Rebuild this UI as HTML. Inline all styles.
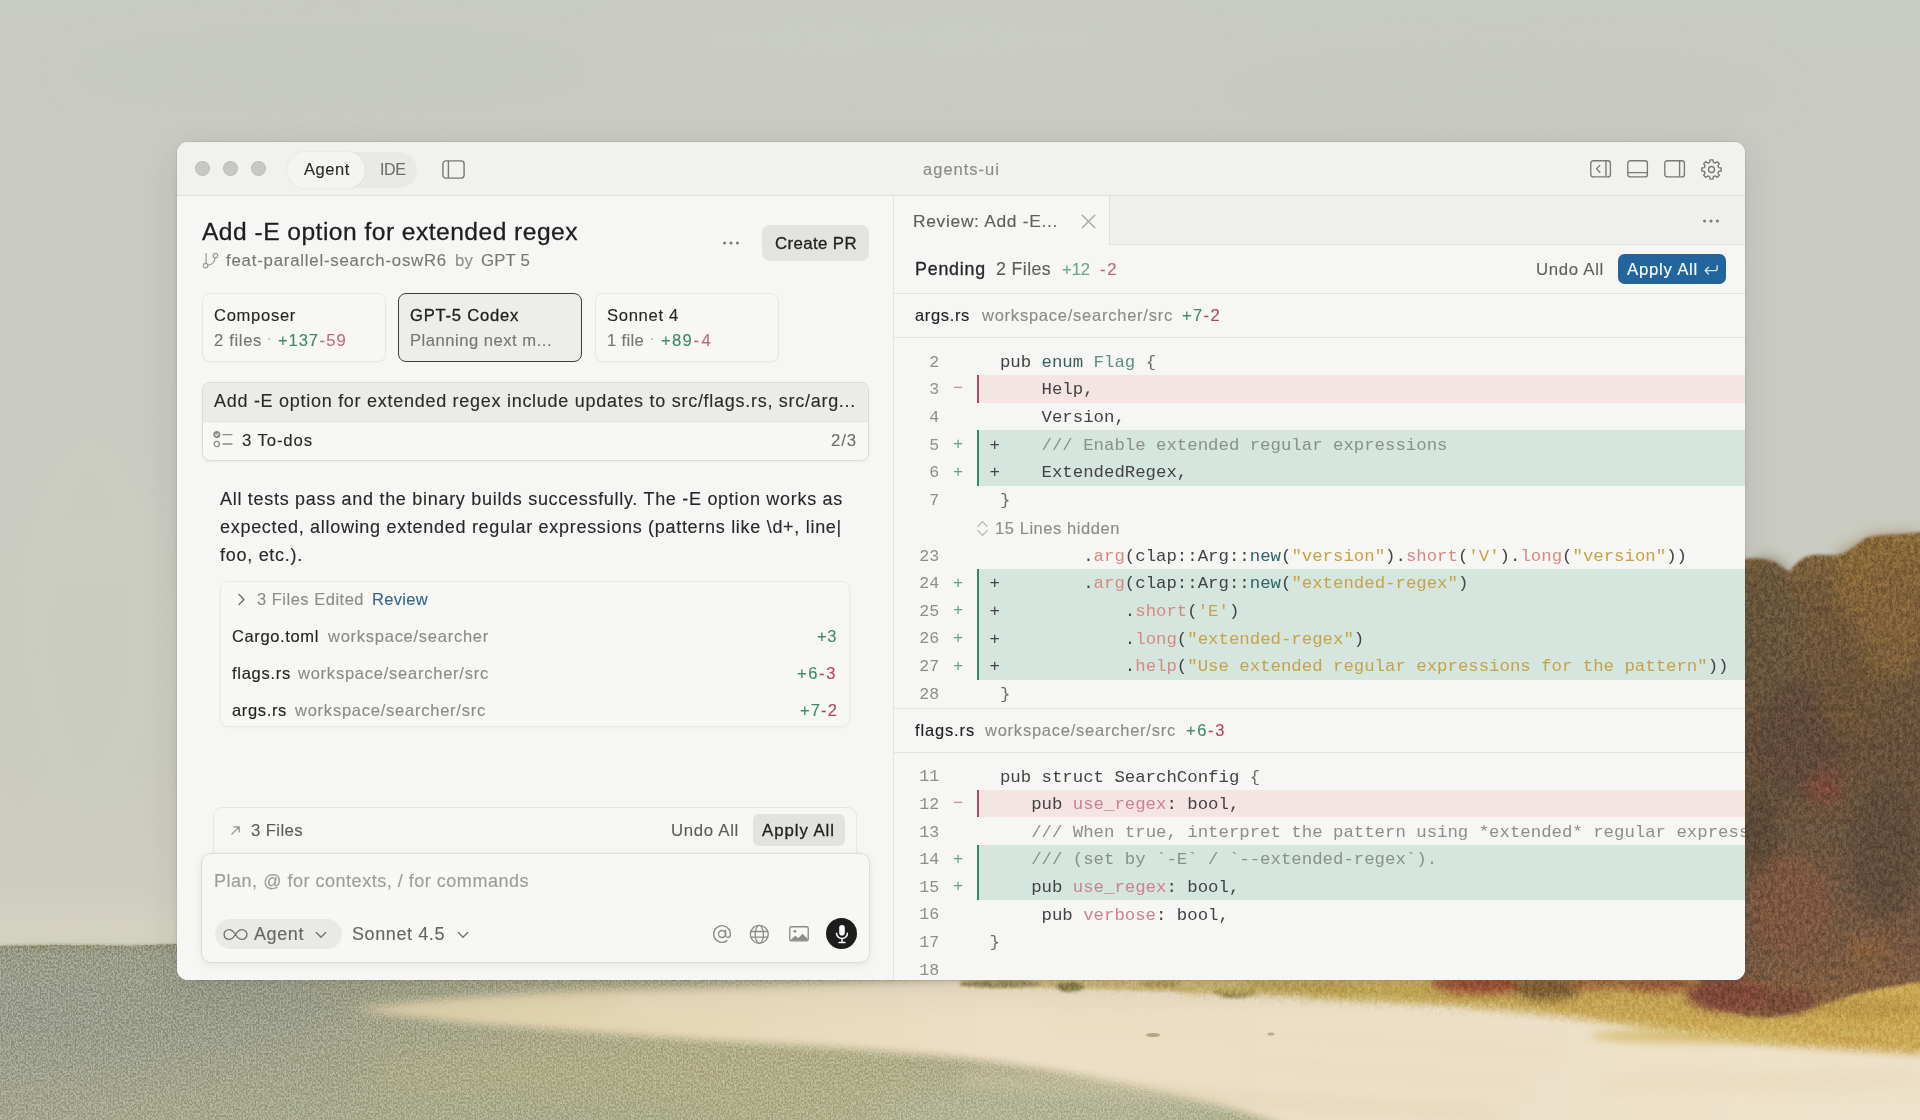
<!DOCTYPE html>
<html>
<head>
<meta charset="utf-8">
<title>agents-ui</title>
<style>
*{box-sizing:border-box;margin:0;padding:0}
html,body{width:1920px;height:1120px;overflow:hidden;background:#c8cbc3}
body{font-family:"Liberation Sans",sans-serif;color:#262626;position:relative;-webkit-font-smoothing:antialiased}
#bg{position:absolute;left:0;top:0;width:1920px;height:1120px;display:block}
#win{will-change:transform;transform:translateZ(0);position:absolute;left:177px;top:142px;width:1568px;height:838px;border-radius:11px;background:#f6f6f4;overflow:hidden;
 box-shadow:0 0 0 .5px rgba(60,60,50,.14),0 10px 36px rgba(40,40,30,.10),0 2px 8px rgba(40,40,30,.06)}
.abs{position:absolute;white-space:pre}
/* all coords inside #win are window-relative: page x-177, page y-142 */
#titlebar{position:absolute;left:0;top:0;width:1568px;height:54px;background:#f1f2ee;border-bottom:1px solid #dfdfda}
#left{position:absolute;left:0;top:54px;width:716px;height:784px;background:#f6f6f4}
#divider{position:absolute;left:716px;top:54px;width:1px;height:784px;background:#e5e5e1}
#right{position:absolute;left:717px;top:54px;width:851px;height:784px;background:#f6f6f4;overflow:hidden}
.t{position:absolute;white-space:pre;line-height:20px;height:20px;-webkit-text-stroke:.13px currentColor}

/* titlebar */
.tl{position:absolute;top:19px;width:15px;height:15px;border-radius:50%;background:#c7c8c4;box-shadow:inset 0 0 0 1px rgba(0,0,0,.06)}
#seg{position:absolute;left:110px;top:10px;width:130px;height:36px;border-radius:18px;background:#e9e9e5}
#segsel{position:absolute;left:0;top:0;width:78px;height:36px;border-radius:18px;background:#f4f4f0;box-shadow:0 0 3px rgba(0,0,0,.07)}
.ico{position:absolute;overflow:visible}

#pg{position:absolute;left:-177px;top:-142px;width:1920px;height:1120px}
.b{position:absolute}
.t.md{-webkit-text-stroke:.3px currentColor}
.g{color:#3d8a68}.r{color:#b5445f}
.card{position:absolute;top:292.5px;height:69.5px;border-radius:8px;background:#f7f7f4;border:1px solid #e7e7e3;box-shadow:0 1px 2px rgba(0,0,0,.03)}
.mut{color:#8b8b89}
.dim{color:#6b6b69}

/* right pane */
.ln{margin-top:1.4px;position:absolute;left:900px;width:39px;text-align:right;font-family:"Liberation Mono",monospace;font-size:16.6px;color:#8e8e8c;line-height:20px;height:20px;letter-spacing:-.1px}
.gm{margin-top:1.4px;position:absolute;left:950px;width:16px;text-align:center;font-family:"Liberation Mono",monospace;font-size:17px;line-height:20px;height:20px}
.gp{color:#5fa585}.gn{color:#c98a9b}
.band{position:absolute;left:976.5px;width:770px}
.band.add{background:#d4e6dd;border-left:2px solid #2c8c66}
.band.del{background:#f4e4e2;border-left:2px solid #b7446a}
.cd{margin-top:1.5px;position:absolute;left:989.5px;white-space:pre;font-family:"Liberation Mono",monospace;font-size:17.35px;line-height:20px;height:20px;color:#434343}
.k{color:#3a5c5c}.ty{color:#5b9085}.pn{color:#6c6c6a}.cm{color:#8a908c}.fn{color:#d78a83}.st{color:#c7a247}.nw{color:#2e6268}.vr{color:#cc8291}
.hline{position:absolute;left:894px;width:852px;height:1px;background:#e3e3df}
</style>
</head>
<body>
<svg id="bg" viewBox="0 0 1920 1120" preserveAspectRatio="none">
 <defs>
  <linearGradient id="sky" x1="0" y1="0" x2="0" y2="1">
   <stop offset="0" stop-color="#c8cbc3"/>
   <stop offset="0.5" stop-color="#c9cbc2"/>
   <stop offset="0.8" stop-color="#cbcbc0"/>
   <stop offset="0.94" stop-color="#cfcdc0"/>
   <stop offset="1" stop-color="#d5d2c1"/>
  </linearGradient>
  <linearGradient id="water" x1="0" y1="0" x2="1920" y2="0" gradientUnits="userSpaceOnUse">
   <stop offset="0" stop-color="#9c9e8c"/>
   <stop offset="0.18" stop-color="#a2a38a"/>
   <stop offset="0.36" stop-color="#acaa88"/>
   <stop offset="0.55" stop-color="#b1ae89"/>
   <stop offset="1" stop-color="#a8ab8d"/>
  </linearGradient>
  <linearGradient id="waterV" x1="0" y1="946" x2="0" y2="1120" gradientUnits="userSpaceOnUse">
   <stop offset="0" stop-color="#8f9078" stop-opacity=".35"/>
   <stop offset="0.25" stop-color="#a0a088" stop-opacity="0"/>
   <stop offset="1" stop-color="#b4b694" stop-opacity=".35"/>
  </linearGradient>
  <linearGradient id="sand" x1="355" y1="0" x2="1920" y2="0" gradientUnits="userSpaceOnUse">
   <stop offset="0" stop-color="#d9cba6"/>
   <stop offset="0.12" stop-color="#e2d3b0"/>
   <stop offset="0.4" stop-color="#ecdfc5"/>
   <stop offset="1" stop-color="#eee2ca"/>
  </linearGradient>
  <linearGradient id="fol" x1="0" y1="532" x2="0" y2="1010" gradientUnits="userSpaceOnUse">
   <stop offset="0" stop-color="#86693a"/>
   <stop offset="0.12" stop-color="#72583a"/>
   <stop offset="0.45" stop-color="#66503a"/>
   <stop offset="0.75" stop-color="#6e5642"/>
   <stop offset="0.92" stop-color="#7a5a42"/>
   <stop offset="1" stop-color="#86603e"/>
  </linearGradient>
  <linearGradient id="grass" x1="960" y1="0" x2="1920" y2="0" gradientUnits="userSpaceOnUse">
   <stop offset="0" stop-color="#d2c08c"/>
   <stop offset="0.3" stop-color="#cbb46e"/>
   <stop offset="0.55" stop-color="#c6a756"/>
   <stop offset="0.8" stop-color="#c8a754"/>
   <stop offset="1" stop-color="#caa854"/>
  </linearGradient>
  <filter id="b2" x="-10%" y="-20%" width="120%" height="140%"><feGaussianBlur stdDeviation="1.8"/></filter>
  <filter id="b4" x="-5%" y="-30%" width="110%" height="160%"><feGaussianBlur stdDeviation="4"/></filter>
  <filter id="b8" x="-10%" y="-40%" width="120%" height="180%"><feGaussianBlur stdDeviation="8"/></filter>
  <filter id="b16" x="-20%" y="-50%" width="140%" height="200%"><feGaussianBlur stdDeviation="16"/></filter>
  <filter id="grain" x="0" y="0" width="100%" height="100%" color-interpolation-filters="sRGB">
   <feTurbulence type="fractalNoise" baseFrequency="0.6 0.45" numOctaves="2" seed="11"/>
   <feColorMatrix type="matrix" values="0.6 0.6 0.6 0 -0.4  0.6 0.6 0.6 0 -0.4  0.6 0.6 0.6 0 -0.4  0 0 0 0 1"/>
   <feComponentTransfer><feFuncR type="linear" slope="3" intercept="-1"/><feFuncG type="linear" slope="3" intercept="-1"/><feFuncB type="linear" slope="3" intercept="-1"/></feComponentTransfer>
   <feGaussianBlur stdDeviation="0.55"/>
  </filter>
  <filter id="grainC" x="0" y="0" width="100%" height="100%" color-interpolation-filters="sRGB">
   <feTurbulence type="fractalNoise" baseFrequency="0.28 0.16" numOctaves="3" seed="4"/>
   <feColorMatrix type="matrix" values="0.6 0.6 0.6 0 -0.4  0.6 0.6 0.6 0 -0.4  0.6 0.6 0.6 0 -0.4  0 0 0 0 1"/>
   <feComponentTransfer><feFuncR type="linear" slope="2.6" intercept="-0.8"/><feFuncG type="linear" slope="2.6" intercept="-0.8"/><feFuncB type="linear" slope="2.6" intercept="-0.8"/></feComponentTransfer>
  </filter>
  <clipPath id="cpFol"><path d="M1700 560 L1745 559 C1758 557 1770 560 1778 564 C1784 568 1787 572 1790 571 C1794 566 1800 558 1809 556 C1820 553 1832 557 1842 554 C1852 550 1858 543 1864 539 C1876 533 1900 536 1920 532 L1920 1056 C1860 1052 1800 1050 1762 1046 C1680 1034 1600 1026 1537 1021 C1420 1012 1300 1006 1180 998 L960 990 L960 975 L1700 975 Z"/></clipPath>
 </defs>
 <!-- sky -->
 <rect x="0" y="0" width="1920" height="960" fill="url(#sky)"/>
 <g filter="url(#b16)" opacity=".5">
  <ellipse cx="330" cy="70" rx="260" ry="40" fill="#c4c8c0"/>
  <ellipse cx="900" cy="40" rx="300" ry="36" fill="#cbcec6"/>
  <ellipse cx="1500" cy="90" rx="280" ry="40" fill="#c5c8c0"/>
  <ellipse cx="90" cy="620" rx="80" ry="200" fill="#cccdc2"/>
  <ellipse cx="1840" cy="330" rx="90" ry="160" fill="#c9ccc3"/>
  <ellipse cx="90" cy="922" rx="170" ry="14" fill="#d9d5c2"/>
 </g>
 <!-- water -->
 <path d="M0 946 L60 945 L130 946 L177 944 L1920 944 L1920 1120 L0 1120 Z" fill="url(#water)"/>
 <path d="M0 946 L60 945 L130 946 L177 944 L1920 944 L1920 1120 L0 1120 Z" fill="url(#waterV)"/>
 <path d="M0 945 L60 944 L130 945 L200 943 L200 948 L0 950 Z" fill="#8e8e6c" opacity=".55" filter="url(#b2)"/>
 <g filter="url(#b16)" opacity=".6">
  <ellipse cx="120" cy="1010" rx="220" ry="40" fill="#989b8b"/>
  <ellipse cx="640" cy="1075" rx="280" ry="34" fill="#b3af87"/>
  <ellipse cx="1060" cy="1112" rx="190" ry="26" fill="#b3b79e"/>
  <ellipse cx="420" cy="1115" rx="300" ry="16" fill="#a6aa8c"/>
 </g>
 <g style="mix-blend-mode:overlay">
  <rect x="0" y="944" width="1920" height="176" filter="url(#grain)" opacity=".2"/>
 </g>
 <!-- sand -->
 <g filter="url(#b4)">
  <path d="M352 1010 C400 1003 440 999 480 996 C560 991 640 989 700 988 C800 985 900 981 960 978 L1970 974 L1970 1170 L1400 1170 L1268 1120 C1245 1112 1225 1106 1200 1100 C1165 1092 1130 1086 1100 1080 C1050 1070 1000 1063 960 1058 C880 1050 780 1044 700 1040 C620 1035 540 1028 480 1024 C430 1020 390 1014 352 1010 Z" fill="url(#sand)"/>
 </g>
 <g filter="url(#b8)" opacity=".55">
  <path d="M620 1000 C760 994 900 992 1040 996 L1040 1006 C900 1002 760 1004 620 1010 Z" fill="#f0e4cc"/>
  <path d="M960 1074 C1100 1080 1300 1100 1500 1108 L1500 1118 C1300 1112 1100 1092 960 1084 Z" fill="#dccfae"/>
  <path d="M1050 1024 C1200 1026 1400 1038 1560 1050 L1560 1058 C1400 1046 1200 1034 1050 1030 Z" fill="#e3d5b3"/>
  <path d="M1240 1060 C1360 1066 1440 1074 1520 1078 L1520 1086 C1440 1082 1360 1074 1240 1068 Z" fill="#dfd1b2"/>
  <path d="M1600 1078 C1700 1072 1800 1074 1920 1070 L1920 1086 C1800 1090 1700 1088 1600 1090 Z" fill="#e4d6b6"/>
 </g>
 <ellipse cx="1153" cy="1035" rx="7" ry="2" fill="#a39a78" opacity=".8"/>
 <ellipse cx="1271" cy="1034" rx="3.5" ry="1.5" fill="#a5a08c" opacity=".8"/>
 <!-- thin scrub under window x 960-1250 -->
 <g filter="url(#b2)">
  <path d="M960 975 L1260 975 L1260 992 C1200 994 1120 990 1060 988 C1020 987 990 988 960 986 Z" fill="#cdb97e"/>
  <ellipse cx="1000" cy="984" rx="40" ry="4" fill="#9c9060"/>
  <ellipse cx="1070" cy="987" rx="14" ry="5" fill="#8c8250"/>
  <ellipse cx="1235" cy="990" rx="22" ry="8" fill="#8f8248"/>
  <ellipse cx="1170" cy="984" rx="30" ry="4" fill="#b39c58"/>
 </g>
 <!-- grass band -->
 <g filter="url(#b4)">
  <path d="M1180 975 L1970 975 L1970 1056 L1920 1054 C1860 1050 1800 1047 1762 1043 C1700 1036 1640 1026 1580 1018 C1500 1008 1400 1000 1300 996 C1260 994 1220 993 1180 992 Z" fill="url(#grass)"/>
 </g>
 <g filter="url(#b4)" opacity=".8">
  <ellipse cx="1700" cy="1036" rx="110" ry="7" fill="#d2b766"/>
  <ellipse cx="1870" cy="1008" rx="60" ry="10" fill="#b8954a"/>
  <ellipse cx="1400" cy="994" rx="100" ry="5" fill="#c4a850"/>
  <ellipse cx="1300" cy="986" rx="60" ry="6" fill="#b79c54"/>
 </g>
 <!-- foliage -->
 <path d="M1700 560 L1745 559 C1758 557 1770 560 1778 564 C1784 568 1787 572 1790 571 C1794 566 1800 558 1809 556 C1820 553 1832 557 1842 554 C1852 550 1858 543 1864 539 C1876 533 1900 536 1920 532 L1970 532 L1970 980 L1920 982 C1895 986 1870 990 1850 996 C1825 1004 1800 1012 1780 1016 C1765 1019 1755 1018 1745 1016 L1700 1002 Z" fill="url(#fol)" filter="url(#b2)"/>
 <path d="M1836 556 C1856 548 1864 540 1874 538 C1890 534 1905 538 1920 534 L1920 640 C1890 650 1860 630 1836 600 Z" fill="#8c6c38" filter="url(#b8)" opacity=".7"/>
 <g filter="url(#b8)" opacity=".85">
  <ellipse cx="1768" cy="630" rx="30" ry="70" fill="#67563e"/>
  <ellipse cx="1800" cy="740" rx="44" ry="60" fill="#5e4a3a"/>
  <ellipse cx="1892" cy="620" rx="34" ry="60" fill="#80623a"/>
  <ellipse cx="1850" cy="700" rx="30" ry="40" fill="#6c5238"/>
  <ellipse cx="1826" cy="788" rx="18" ry="16" fill="#80483a"/>
  <ellipse cx="1885" cy="850" rx="36" ry="70" fill="#5e4b3a"/>
  <ellipse cx="1790" cy="905" rx="44" ry="50" fill="#7e563f"/>
  <ellipse cx="1868" cy="950" rx="22" ry="14" fill="#86603a"/>
  <ellipse cx="1760" cy="830" rx="20" ry="40" fill="#5c4838"/>
 </g>
 <!-- reddish shrubs in grass under window -->
 <g filter="url(#b4)" opacity=".92">
  <ellipse cx="1482" cy="984" rx="50" ry="10" fill="#9a4834"/>
  <ellipse cx="1548" cy="988" rx="34" ry="12" fill="#7a5c36"/>
  <ellipse cx="1598" cy="982" rx="30" ry="7" fill="#a0603a"/>
  <ellipse cx="1660" cy="984" rx="40" ry="8" fill="#9a5a3a"/>
  <ellipse cx="1730" cy="996" rx="44" ry="16" fill="#82483a"/>
  <ellipse cx="1785" cy="1002" rx="30" ry="12" fill="#784a3a"/>
 </g>
 <!-- foliage grain -->
 <g style="mix-blend-mode:overlay" clip-path="url(#cpFol)">
  <rect x="960" y="530" width="960" height="530" filter="url(#grainC)" opacity=".13"/>
  <rect x="960" y="530" width="960" height="530" filter="url(#grain)" opacity=".10"/>
 </g>
</svg>

<div id="win">
 <div id="titlebar">
  <div class="tl" style="left:18px"></div><div class="tl" style="left:46px"></div><div class="tl" style="left:73.5px"></div>
  <div id="seg"><div id="segsel"></div></div>
  <div class="t" id="t_agent" style="left:127px;top:17px;font-size:16.5px;color:#2a2a2a;letter-spacing:0.575px">Agent</div>
  <div class="t" id="t_ide" style="left:203px;top:18.2px;font-size:16px;color:#6e6e6e;letter-spacing:-0.391px">IDE</div>
  <svg class="ico" style="left:265px;top:17.5px" width="23" height="19" viewBox="0 0 23 19" fill="none" stroke="#787878" stroke-width="1.4"><rect x="0.9" y="0.9" width="21.2" height="17.2" rx="3"/><path d="M6.4 1v17"/></svg>
  <div class="t" id="t_title" style="left:746px;top:17px;font-size:16.5px;color:#8a8a88;letter-spacing:1.012px">agents-ui</div>
  <svg class="ico" style="left:1412.8px;top:18px" width="21.2" height="17.7" viewBox="0 0 22 18.4" fill="none" stroke="#787878" stroke-width="1.4"><rect x="0.8" y="0.8" width="20.4" height="16.8" rx="2.6"/><path d="M16.6 1v16.4"/><path d="M10.2 5.6 L6.8 9.2 L10.2 12.8" stroke-linecap="round" stroke-linejoin="round"/></svg>
  <svg class="ico" style="left:1449.8px;top:18px" width="21.2" height="17.7" viewBox="0 0 22 18.4" fill="none" stroke="#787878" stroke-width="1.4"><rect x="0.8" y="0.8" width="20.4" height="16.8" rx="2.6"/><path d="M1 13.2h20"/></svg>
  <svg class="ico" style="left:1486.8px;top:18px" width="21.2" height="17.7" viewBox="0 0 22 18.4" fill="none" stroke="#787878" stroke-width="1.4"><rect x="0.8" y="0.8" width="20.4" height="16.8" rx="2.6"/><path d="M16.2 1v16.4"/></svg>
  <svg class="ico" style="left:1522.5px;top:15.7px" width="23" height="23" viewBox="0 0 24 24" fill="none" stroke="#787878" stroke-width="1.45" stroke-linecap="round" stroke-linejoin="round"><path d="M10.01 4.56 L10.49 1.91 L13.51 1.91 L13.99 4.56 L15.85 5.33 L18.07 3.80 L20.20 5.93 L18.67 8.15 L19.44 10.01 L22.09 10.49 L22.09 13.51 L19.44 13.99 L18.67 15.85 L20.20 18.07 L18.07 20.20 L15.85 18.67 L13.99 19.44 L13.51 22.09 L10.49 22.09 L10.01 19.44 L8.15 18.67 L5.93 20.20 L3.80 18.07 L5.33 15.85 L4.56 13.99 L1.91 13.51 L1.91 10.49 L4.56 10.01 L5.33 8.15 L3.80 5.93 L5.93 3.80 L8.15 5.33 Z"/><circle cx="12" cy="12" r="3.1"/></svg>
 </div>
 <div id="left"></div>
 <div id="divider"></div>
 <div id="right"></div>
<div id="pg">
<!-- ===== LEFT PANE ===== -->
<div class="t md" id="l_title" style="left:202px;top:218.0px;height:28px;line-height:28px;font-size:24.6px;color:#1e1e1e;letter-spacing:0.470px">Add -E option for extended regex</div>
<svg class="ico" style="left:201px;top:252px" width="18" height="17" viewBox="0 0 18 17" fill="none" stroke="#9a9a98" stroke-width="1.2" stroke-linecap="round"><path d="M5.1 1.6v9.6"/><circle cx="4.6" cy="13.6" r="2.3"/><circle cx="14.4" cy="3.6" r="2.3"/><path d="M14 6c-.4 4.2-3.4 6.8-7.2 7.2"/></svg>
<div class="t" id="l_branch" style="left:226px;top:250.5px;font-size:16.8px;color:#777775;letter-spacing:0.787px">feat-parallel-search-oswR6</div>
<div class="t" id="l_by" style="left:455px;top:250.5px;font-size:16.8px;color:#8f8f8d;letter-spacing:0.133px">by</div>
<div class="t" id="l_gpt5" style="left:481px;top:250.5px;font-size:16.8px;color:#777775;letter-spacing:0.159px">GPT 5</div>
<svg class="ico" style="left:722px;top:240px" width="18" height="6" viewBox="0 0 18 6" fill="#7c7c7a"><circle cx="2.6" cy="3" r="1.55"/><circle cx="9" cy="3" r="1.55"/><circle cx="15.4" cy="3" r="1.55"/></svg>
<div class="b" style="left:762px;top:225px;width:107px;height:36px;border-radius:8px;background:#e3e3e0"></div>
<div class="t md" id="l_createpr" style="left:775px;top:233.8px;font-size:16.8px;color:#222;letter-spacing:0.406px">Create PR</div>

<div class="card" style="left:202px;width:183.5px"></div>
<div class="card" style="left:398px;width:183.5px;background:#ededea;border:1.5px solid #3c3c3c;box-shadow:none"></div>
<div class="card" style="left:595px;width:183.5px"></div>
<div class="t" id="c1a" style="left:214px;top:306.0px;font-size:16.6px;color:#262626;letter-spacing:0.682px">Composer</div>
<div class="t" id="c1b" style="left:214px;top:330.7px;font-size:16.6px;color:#767674;letter-spacing:0.663px">2 files</div>
<div class="t" style="left:266.5px;top:329px;font-size:16px;color:#b4b4b2">·</div>
<div class="t g" id="c1c" style="left:278px;top:330.7px;font-size:16.6px;letter-spacing:0.902px">+137</div>
<div class="t r" id="c1d" style="left:319.5px;top:330.7px;font-size:16.6px;color:#c06a7c;letter-spacing:1.172px">-59</div>
<div class="t md" id="c2a" style="left:410px;top:306.0px;font-size:16.6px;color:#222;letter-spacing:0.770px">GPT-5 Codex</div>
<div class="t" id="c2b" style="left:410px;top:330.7px;font-size:16.6px;color:#767674;letter-spacing:0.510px">Planning next m...</div>
<div class="t" id="c3a" style="left:607px;top:306.0px;font-size:16.6px;color:#262626;letter-spacing:0.695px">Sonnet 4</div>
<div class="t" id="c3b" style="left:607px;top:330.7px;font-size:16.6px;color:#767674;letter-spacing:0.323px">1 file</div>
<div class="t" style="left:649.5px;top:329px;font-size:16px;color:#b4b4b2">·</div>
<div class="t g" id="c3c" style="left:661px;top:330.7px;font-size:16.6px;letter-spacing:1.281px">+89</div>
<div class="t r" id="c3d" style="left:693.5px;top:330.7px;font-size:16.6px;color:#c06a7c;letter-spacing:2.367px">-4</div>

<div class="b" style="left:202px;top:381.7px;width:667px;height:79px;border-radius:8px;background:#f7f7f4;border:1px solid #dadad6;box-shadow:0 1px 3px rgba(0,0,0,.05);overflow:hidden"><div style="height:39px;background:#ebebe8;border-bottom:1px solid #e3e3df"></div></div>
<div class="t" id="l_prompt" style="left:214px;top:391px;font-size:18px;color:#2b2b2b;letter-spacing:0.720px">Add -E option for extended regex include updates to src/flags.rs, src/arg...</div>
<svg class="ico" style="left:213px;top:430px" width="20" height="19" viewBox="0 0 20 19" fill="none" stroke="#8a8a88" stroke-width="1.3" stroke-linecap="round"><circle cx="3.8" cy="4.6" r="2.9" fill="#8a8a88"/><path d="M2.5 4.7l1 1 1.7-2" stroke="#f7f7f4" stroke-width="1.1"/><circle cx="3.8" cy="14" r="2.6"/><path d="M10 4.6h9M10 14h9"/></svg>
<div class="t" id="l_todos" style="left:242px;top:430.7px;font-size:16.8px;color:#2b2b2b;letter-spacing:0.867px">3 To-dos</div>
<div class="t" id="l_23" style="left:831px;top:430.7px;font-size:16.8px;color:#6e6e6c;letter-spacing:0.885px">2/3</div>

<div class="t" id="p1" style="left:220px;top:489px;font-size:18px;color:#282828;letter-spacing:0.704px">All tests pass and the binary builds successfully. The -E option works as</div>
<div class="t" id="p2" style="left:220px;top:517px;font-size:18px;color:#282828;letter-spacing:0.705px">expected, allowing extended regular expressions (patterns like \d+, line|</div>
<div class="t" id="p3" style="left:220px;top:545px;font-size:18px;color:#282828;letter-spacing:0.723px">foo, etc.).</div>

<div class="b" style="left:220px;top:581px;width:630px;height:146px;border-radius:8px;background:#f7f7f4;border:1px solid #e9e9e5;box-shadow:0 1px 3px rgba(0,0,0,.04)"></div>
<svg class="ico" style="left:237px;top:592.5px" width="9" height="13" viewBox="0 0 9 13" fill="none" stroke="#6f6f6d" stroke-width="1.4" stroke-linecap="round" stroke-linejoin="round"><path d="M2 1.6l5 4.9-5 4.9"/></svg>
<div class="t" id="f_hdr" style="left:257px;top:589px;font-size:16.5px;color:#8c8c8a;letter-spacing:0.502px">3 Files Edited</div>
<div class="t" id="f_rev" style="left:372px;top:589px;font-size:16.5px;color:#34678a;letter-spacing:0.315px">Review</div>
<div class="t" id="f1a" style="left:232px;top:626px;font-size:16.5px;color:#232323;letter-spacing:0.630px">Cargo.toml</div>
<div class="t mut" id="f1b" style="left:328px;top:626px;font-size:16.5px;letter-spacing:0.741px">workspace/searcher</div>
<div class="t g" id="f1c" style="left:817px;top:626px;font-size:16.5px;letter-spacing:0.594px">+3</div>
<div class="t" id="f2a" style="left:232px;top:663px;font-size:16.5px;color:#232323;letter-spacing:0.727px">flags.rs</div>
<div class="t mut" id="f2b" style="left:298px;top:663px;font-size:16.5px;letter-spacing:0.762px">workspace/searcher/src</div>
<div class="t" id="f2c" style="left:797px;top:663px;font-size:16.5px;letter-spacing:1.629px"><span class="g">+6</span><span class="r">-3</span></div>
<div class="t" id="f3a" style="left:232px;top:700px;font-size:16.5px;color:#232323;letter-spacing:0.652px">args.rs</div>
<div class="t mut" id="f3b" style="left:295px;top:700px;font-size:16.5px;letter-spacing:0.762px">workspace/searcher/src</div>
<div class="t" id="f3c" style="left:800px;top:700px;font-size:16.5px;letter-spacing:1.129px"><span class="g">+7</span><span class="r">-2</span></div>

<div class="b" style="left:213px;top:807px;width:644px;height:60px;border-radius:9px 9px 0 0;background:#f6f6f4;border:1px solid #e6e6e2"></div>
<svg class="ico" style="left:229.5px;top:825px" width="11" height="11" viewBox="0 0 12 12" fill="none" stroke="#8c8c8a" stroke-width="1.3" stroke-linecap="round" stroke-linejoin="round"><path d="M2 10l8-8M4.4 2H10v5.6"/></svg>
<div class="t" id="b_files" style="margin-top:.7px;left:251px;top:820px;font-size:16.8px;color:#5c5c5a;letter-spacing:0.366px">3 Files</div>
<div class="t" id="b_undo" style="margin-top:.7px;left:671px;top:820px;font-size:16.8px;color:#5c5c5a;letter-spacing:0.686px">Undo All</div>
<div class="b" style="left:753px;top:814px;width:92px;height:32px;border-radius:6px;background:#e2e2df"></div>
<div class="t md" id="b_apply" style="margin-top:.7px;left:762px;top:820px;font-size:16.8px;color:#222;letter-spacing:0.958px">Apply All</div>

<div class="b" style="left:200.5px;top:853px;width:669px;height:109.5px;border-radius:10px;background:#f7f7f4;border:1px solid #dcdcd8;box-shadow:0 2px 8px rgba(0,0,0,.07),0 0 2px rgba(0,0,0,.04)"></div>
<div class="t" id="i_ph" style="left:214px;top:871px;font-size:18px;color:#9c9c9a;letter-spacing:0.517px">Plan, @ for contexts, / for commands</div>
<div class="b" style="left:215px;top:919px;width:126.5px;height:30px;border-radius:15px;background:#e9e9e6"></div>
<svg class="ico" style="left:222.5px;top:927.5px" width="25" height="13" viewBox="0 0 25 13" fill="none" stroke="#727270" stroke-width="1.4" stroke-linecap="round"><path d="M12.5 6.5C10.6 3.4 8.6 1.6 6 1.6a4.9 4.9 0 0 0 0 9.8c2.6 0 4.6-1.8 6.5-4.9s3.9-4.9 6.5-4.9a4.9 4.9 0 0 1 0 9.8c-2.6 0-4.6-1.8-6.5-4.9z"/></svg>
<div class="t" id="i_agent" style="left:254px;top:924px;font-size:18px;color:#666664;letter-spacing:0.591px">Agent</div>
<svg class="ico" style="left:314.5px;top:931px" width="12" height="8" viewBox="0 0 12 8" fill="none" stroke="#727270" stroke-width="1.4" stroke-linecap="round" stroke-linejoin="round"><path d="M1.4 1.6L6 6.2l4.6-4.6"/></svg>
<div class="t" id="i_model" style="left:352px;top:924px;font-size:18px;color:#666664;letter-spacing:0.592px">Sonnet 4.5</div>
<svg class="ico" style="left:456.5px;top:931px" width="12" height="8" viewBox="0 0 12 8" fill="none" stroke="#727270" stroke-width="1.4" stroke-linecap="round" stroke-linejoin="round"><path d="M1.4 1.6L6 6.2l4.6-4.6"/></svg>
<svg class="ico" style="left:712px;top:924px" width="20" height="20" viewBox="0 0 24 24" fill="none" stroke="#8b8b89" stroke-width="1.7" stroke-linecap="round" stroke-linejoin="round"><circle cx="12" cy="12" r="4.2"/><path d="M16.2 7.8v5.4a3 3 0 0 0 5.8 1V12a10 10 0 1 0-4 8"/></svg>
<svg class="ico" style="left:748.5px;top:923.6px" width="20.6" height="20.6" viewBox="0 0 22 22" fill="none" stroke="#8b8b89" stroke-width="1.4"><circle cx="11" cy="11" r="9.6"/><ellipse cx="11" cy="11" rx="4.4" ry="9.6"/><path d="M1.8 8h18.4M1.8 14h18.4"/></svg>
<svg class="ico" style="left:788.8px;top:926px" width="20" height="15.7" viewBox="0 0 21 16.5" fill="none" stroke="#8b8b89" stroke-width="1.4"><rect x=".8" y=".8" width="19.4" height="14.9" rx="1.8"/><circle cx="6.2" cy="5.6" r="1.5" fill="#8b8b89" stroke="none"/><path d="M1.2 15.2l5.4-5 3.2 2.6 4.4-4.6 5.6 5.4v1.6z" fill="#8b8b89" stroke="none"/></svg>
<div class="b" style="left:826px;top:918.3px;width:31px;height:31px;border-radius:50%;background:#1d1d1d"></div>
<svg class="ico" style="left:833.5px;top:924px" width="16" height="20" viewBox="0 0 16 20" fill="none" stroke="#fff" stroke-width="1.5" stroke-linecap="round"><rect x="5.2" y="1" width="5.6" height="10.6" rx="2.8" fill="#fff" stroke="none"/><path d="M2.6 9.2a5.4 5.4 0 0 0 10.8 0M8 14.8v3.4M5 18.4h6"/></svg>
<!-- ===== RIGHT PANE ===== -->
<div class="b" style="left:894px;top:196px;width:852px;height:49px;background:#efefec;border-bottom:1px solid #e1e1dd"></div>
<div class="b" style="left:894px;top:196px;width:216px;height:49px;background:#f6f6f4;border-right:1px solid #e1e1dd"></div>
<div class="t" id="r_tab" style="left:913px;top:211px;font-size:17.4px;color:#5e5e5c;letter-spacing:0.683px">Review: Add -E...</div>
<svg class="ico" style="left:1080.5px;top:213.5px" width="15" height="15" viewBox="0 0 15 15" fill="none" stroke="#a4a4a2" stroke-width="1.3" stroke-linecap="round"><path d="M1.2 1.2l12.6 12.6M13.8 1.2L1.2 13.8"/></svg>
<svg class="ico" style="left:1702px;top:218px" width="18" height="6" viewBox="0 0 18 6" fill="#7c7c7a"><circle cx="2.6" cy="3" r="1.55"/><circle cx="9" cy="3" r="1.55"/><circle cx="15.4" cy="3" r="1.55"/></svg>
<div class="t md" id="r_pending" style="left:915px;top:259px;font-size:17.8px;color:#262626;letter-spacing:0.819px">Pending</div>
<div class="t" id="r_2files" style="left:996px;top:259px;font-size:17.8px;color:#5e5e5c;letter-spacing:0.375px">2 Files</div>
<div class="t" id="r_p12" style="left:1062px;top:260px;font-size:16.6px;color:#6ba88c;letter-spacing:-0.052px">+12</div>
<div class="t" id="r_m2" style="left:1100px;top:260px;font-size:16.6px;color:#c2627c;letter-spacing:1.617px">-2</div>
<div class="t" id="r_undo" style="left:1536px;top:259.9px;font-size:16.8px;color:#5e5e5c;letter-spacing:0.686px">Undo All</div>
<div class="b" style="left:1617.5px;top:254px;width:108.7px;height:30px;border-radius:6.5px;background:#22659c"></div>
<div class="t" id="r_apply" style="left:1627px;top:259.9px;font-size:16.8px;color:#fff;letter-spacing:0.736px">Apply All</div>
<svg class="ico" style="left:1702.5px;top:262.5px" width="16" height="13" viewBox="0 0 16 13" fill="none" stroke="#cfe0ee" stroke-width="1.4" stroke-linecap="round" stroke-linejoin="round"><path d="M14.2 2.6v2.8a2.2 2.2 0 0 1-2.2 2.2H2.2M5.4 4.3L2.2 7.6l3.2 3.3"/></svg>
<div class="hline" style="top:292.5px"></div>
<div class="t" id="r_f1a" style="left:915px;top:305px;font-size:16.5px;color:#232323;letter-spacing:0.652px">args.rs</div>
<div class="t mut" id="r_f1b" style="left:982px;top:305px;font-size:16.5px;letter-spacing:0.762px">workspace/searcher/src</div>
<div class="t" id="r_f1c" style="left:1182px;top:305px;font-size:16.5px;letter-spacing:1.379px"><span class="g">+7</span><span class="r">-2</span></div>
<div class="hline" style="top:337px"></div>
<svg class="ico" style="left:976px;top:519.5px" width="13" height="17" viewBox="0 0 13 17" fill="none" stroke="#b4b4b2" stroke-width="1.3" stroke-linecap="round" stroke-linejoin="round"><path d="M1.8 6.4L6.5 1.6l4.7 4.8M1.8 10.6l4.7 4.8 4.7-4.8"/></svg>
<div class="t" id="r_hidden" style="left:995px;top:517.6px;font-size:16.5px;color:#8c8c8a;letter-spacing:0.566px">15 Lines hidden</div>
<div class="hline" style="top:708px"></div>
<div class="t" id="r_f2a" style="left:915px;top:720px;font-size:16.5px;color:#232323;letter-spacing:0.852px">flags.rs</div>
<div class="t mut" id="r_f2b" style="left:985px;top:720px;font-size:16.5px;letter-spacing:0.762px">workspace/searcher/src</div>
<div class="t" id="r_f2c" style="left:1186px;top:720px;font-size:16.5px;letter-spacing:1.629px"><span class="g">+6</span><span class="r">-3</span></div>
<div class="hline" style="top:752px"></div>
<div class="band del" style="top:375.1px;height:27.6px"></div>
<div class="band add" style="top:430.4px;height:55.3px"></div>
<div class="band add" style="top:569.0px;height:110.5px"></div>
<div class="band del" style="top:789.8px;height:27.6px"></div>
<div class="band add" style="top:845.1px;height:55.3px"></div>
<div class="ln" style="top:351.3px">2</div><div class="cd" style="top:351.3px"> pub <span class="k">enum</span> <span class="ty">Flag</span> <span class="pn">{</span></div>
<div class="gm gn" style="top:377.9px">−</div><div class="ln" style="top:378.9px">3</div><div class="cd" style="top:378.9px">     Help,</div>
<div class="ln" style="top:406.6px">4</div><div class="cd" style="top:406.6px">     Version,</div>
<div class="gm gp" style="top:433.7px">+</div><div class="ln" style="top:434.2px">5</div><div class="cd" style="top:434.2px">+    <span class="cm">/// Enable extended regular expressions</span></div>
<div class="gm gp" style="top:461.3px">+</div><div class="ln" style="top:461.8px">6</div><div class="cd" style="top:461.8px">+    ExtendedRegex,</div>
<div class="ln" style="top:489.5px">7</div><div class="cd" style="top:489.5px"> <span class="pn">}</span></div>
<div class="ln" style="top:545.2px">23</div><div class="cd" style="top:545.2px">         .<span class="fn">arg</span>(clap::Arg::<span class="nw">new</span>(<span class="st">"version"</span>).<span class="fn">short</span>(<span class="st">'V'</span>).<span class="fn">long</span>(<span class="st">"version"</span>))</div>
<div class="gm gp" style="top:572.3px">+</div><div class="ln" style="top:572.8px">24</div><div class="cd" style="top:572.8px">+        .<span class="fn">arg</span>(clap::Arg::<span class="nw">new</span>(<span class="st">"extended-regex"</span>)</div>
<div class="gm gp" style="top:600.0px">+</div><div class="ln" style="top:600.5px">25</div><div class="cd" style="top:600.5px">+            .<span class="fn">short</span>(<span class="st">'E'</span>)</div>
<div class="gm gp" style="top:627.6px">+</div><div class="ln" style="top:628.1px">26</div><div class="cd" style="top:628.1px">+            .<span class="fn">long</span>(<span class="st">"extended-regex"</span>)</div>
<div class="gm gp" style="top:655.2px">+</div><div class="ln" style="top:655.7px">27</div><div class="cd" style="top:655.7px">+            .<span class="fn">help</span>(<span class="st">"Use extended regular expressions for the pattern"</span>))</div>
<div class="ln" style="top:683.4px">28</div><div class="cd" style="top:683.4px"> <span class="pn">}</span></div>
<div class="ln" style="top:766.0px">11</div><div class="cd" style="top:766.0px"> pub struct SearchConfig <span class="pn">{</span></div>
<div class="gm gn" style="top:792.6px">−</div><div class="ln" style="top:793.6px">12</div><div class="cd" style="top:793.6px">    pub <span class="vr">use_regex</span>: bool,</div>
<div class="ln" style="top:821.3px">13</div><div class="cd" style="top:821.3px">    <span class="cm">/// When true, interpret the pattern using *extended* regular expression syntax</span></div>
<div class="gm gp" style="top:848.4px">+</div><div class="ln" style="top:848.9px">14</div><div class="cd" style="top:848.9px">    <span class="cm">/// (set by `-E` / `--extended-regex`).</span></div>
<div class="gm gp" style="top:876.0px">+</div><div class="ln" style="top:876.5px">15</div><div class="cd" style="top:876.5px">    pub <span class="vr">use_regex</span>: bool,</div>
<div class="ln" style="top:904.1px">16</div><div class="cd" style="top:904.1px">     pub <span class="vr">verbose</span>: bool,</div>
<div class="ln" style="top:931.8px">17</div><div class="cd" style="top:931.8px"><span class="pn">}</span></div>
<div class="ln" style="top:959.4px">18</div>
</div>
</div>
</body>
</html>
